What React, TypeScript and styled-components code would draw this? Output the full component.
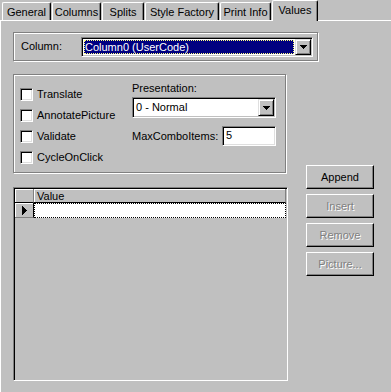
import React from "react";
import styled, { createGlobalStyle } from "styled-components";

const Global = createGlobalStyle`
  html, body { margin: 0; padding: 0; background: #c0c0c0; }
  body {
    font-family: "Liberation Sans", Arial, sans-serif;
    font-size: 11px;
    line-height: 13px;
    color: #000;
  }
  * { box-sizing: border-box; }
`;

const Window = styled.div`
  width: 391px;
  height: 392px;
  overflow: hidden;
  background: #c0c0c0;
  display: flex;
  flex-direction: column;
`;

const TabStrip = styled.div`
  height: 20px;
  flex: none;
  display: flex;
  align-items: flex-end;
  padding-left: 2px;
  gap: 1px;
  position: relative;
  z-index: 1;
`;

const Tab = styled.div<{ $w: number; $active?: boolean }>`
  width: ${(p) => p.$w}px;
  height: ${(p) => (p.$active ? 21 : 18)}px;
  margin-bottom: ${(p) => (p.$active ? -1 : 0)}px;
  background: #c0c0c0;
  border-top: 1px solid #fff;
  border-left: 1px solid #fff;
  border-right: 1px solid #000;
  box-shadow: inset -1px 0 #808080;
  border-top-left-radius: 2px;
  border-top-right-radius: 2px;
  display: flex;
  justify-content: center;
  align-items: flex-start;
  padding-top: 3px;
  white-space: nowrap;
`;

const Page = styled.div`
  flex: 1;
  border-top: 1px solid #fff;
  border-left: 1px solid #fff;
  padding: 11px 0 0 12px;
  display: flex;
  flex-direction: column;
`;

const Group = styled.div<{ $w: number; $h: number }>`
  width: ${(p) => p.$w}px;
  height: ${(p) => p.$h}px;
  flex: none;
  border: 1px solid #808080;
  box-shadow: inset 1px 1px #fff, 1px 1px #fff;
`;

const ColumnGroup = styled(Group)`
  display: flex;
  align-items: flex-start;
  padding: 4px 0 0 7px;
`;

const FieldLabel = styled.span<{ $w?: number }>`
  width: ${(p) => (p.$w ? `${p.$w}px` : "auto")};
  flex: none;
  white-space: nowrap;
`;

const ColumnLabel = styled(FieldLabel)`
  margin-top: 3px;
`;

const Combo = styled.div<{ $w: number; $h: number }>`
  width: ${(p) => p.$w}px;
  height: ${(p) => p.$h}px;
  flex: none;
  background: #fff;
  border-top: 1px solid #808080;
  border-left: 1px solid #808080;
  border-right: 1px solid #fff;
  border-bottom: 1px solid #fff;
  box-shadow: inset 1px 1px #000, inset -1px -1px #c0c0c0;
  padding: 1px;
  display: flex;
  align-items: stretch;
`;

const ComboText = styled.div<{ $selected?: boolean }>`
  flex: 1;
  margin: 1px 1px 1px 1px;
  padding-left: ${(p) => (p.$selected ? 1 : 1)}px;
  display: flex;
  align-items: center;
  white-space: nowrap;
  color: ${(p) => (p.$selected ? "#fff" : "#000")};
  background: ${(p) => (p.$selected ? "#000080" : "transparent")};
  outline: ${(p) => (p.$selected ? "1px dotted #ffff80" : "none")};
  outline-offset: -1px;
`;

const DropButton = styled.div`
  width: 16px;
  flex: none;
  background: #c0c0c0;
  border-top: 1px solid #dfdfdf;
  border-left: 1px solid #dfdfdf;
  border-right: 1px solid #000;
  border-bottom: 1px solid #000;
  box-shadow: inset 1px 1px #fff, inset -1px -1px #808080;
  display: flex;
  align-items: center;
  justify-content: center;
`;

const Row = styled.div`
  display: flex;
  align-items: flex-start;
  gap: 18px;
  margin-top: 13px;
`;

const LeftColumn = styled.div`
  width: 275px;
  flex: none;
  display: flex;
  flex-direction: column;
`;

const OptionsGroup = styled(Group)`
  display: flex;
  padding: 9px 0 0 6px;
`;

const CheckList = styled.div`
  width: 112px;
  flex: none;
  display: flex;
  flex-direction: column;
`;

const CheckRow = styled.label`
  height: 21px;
  display: flex;
  align-items: center;
  gap: 4px;
  white-space: nowrap;
`;

const CheckBox = styled.span`
  width: 13px;
  height: 13px;
  flex: none;
  background: #fff;
  border-top: 1px solid #808080;
  border-left: 1px solid #808080;
  border-right: 1px solid #fff;
  border-bottom: 1px solid #fff;
  box-shadow: inset 1px 1px #000, inset -1px -1px #dfdfdf;
`;

const Settings = styled.div`
  display: flex;
  flex-direction: column;
  padding-top: -2px;
  margin-top: -2px;
`;

const PresentationCombo = styled(Combo)`
  margin-top: 2px;
`;

const MaxRow = styled.div`
  display: flex;
  align-items: center;
  margin-top: 8px;
`;

const TextInput = styled.div<{ $w: number }>`
  width: ${(p) => p.$w}px;
  height: 20px;
  background: #fff;
  border-top: 1px solid #808080;
  border-left: 1px solid #808080;
  border-right: 1px solid #fff;
  border-bottom: 1px solid #fff;
  box-shadow: inset 1px 1px #000, inset -1px -1px #dfdfdf;
  padding: 2px 0 0 3px;
`;

const Grid = styled.div`
  width: 275px;
  height: 194px;
  margin-top: 14px;
  border-top: 1px solid #808080;
  border-left: 1px solid #808080;
  border-right: 1px solid #fff;
  border-bottom: 1px solid #fff;
  box-shadow: inset 1px 1px #000;
  padding: 1px 1px 0 1px;
  display: flex;
  flex-direction: column;
`;

const GridRow = styled.div<{ $h: number }>`
  height: ${(p) => p.$h}px;
  display: flex;
  flex: none;
`;

const HeaderCell = styled.div<{ $w?: number }>`
  ${(p) => (p.$w ? `width: ${p.$w}px; flex: none;` : "flex: 1;")}
  background: #c0c0c0;
  border-right: 1px solid #808080;
  border-bottom: 1px solid #000;
  box-shadow: inset 1px 1px #fff;
  padding: 1px 0 0 3px;
  white-space: nowrap;
`;

const Selector = styled(HeaderCell)`
  display: flex;
  align-items: center;
  justify-content: center;
  padding: 0 0 0 1px;
  border-bottom: 1px solid #808080;
  border-right: 1px solid #000;
`;

const DataCell = styled.div`
  flex: 1;
  background: #fff;
  outline: 1px dotted #000;
  outline-offset: -1px;
`;

const Buttons = styled.div`
  display: flex;
  flex-direction: column;
  gap: 5px;
  padding-top: 91px;
`;

const Button = styled.div<{ $disabled?: boolean }>`
  width: 68px;
  height: 24px;
  background: #c0c0c0;
  border-top: 1px solid #fff;
  border-left: 1px solid #fff;
  border-right: 1px solid #000;
  border-bottom: 1px solid #000;
  box-shadow: inset -1px -1px #808080;
  display: flex;
  align-items: center;
  justify-content: center;
  color: ${(p) => (p.$disabled ? "#808080" : "#000")};
  text-shadow: ${(p) => (p.$disabled ? "1px 1px 0 #fff" : "none")};
`;

const DownArrow = () => (
  <svg width="7" height="4" viewBox="0 0 7 4" shapeRendering="crispEdges">
    <path d="M0 0h7v1H0z M1 1h5v1H1z M2 2h3v1H2z M3 3h1v1H3z" fill="#000" />
  </svg>
);

const RightArrow = () => (
  <svg width="5" height="9" viewBox="0 0 5 9" shapeRendering="crispEdges">
    <path d="M0 0h1v9H0z M1 1h1v7H1z M2 2h1v5H2z M3 3h1v3H3z M4 4h1v1H4z" fill="#000" />
  </svg>
);

const tabs: { label: string; w: number; active?: boolean }[] = [
  { label: "General", w: 49 },
  { label: "Columns", w: 49 },
  { label: "Splits", w: 42 },
  { label: "Style Factory", w: 74 },
  { label: "Print Info", w: 51 },
  { label: "Values", w: 46, active: true },
];

const checks = ["Translate", "AnnotatePicture", "Validate", "CycleOnClick"];

const buttons: { label: string; disabled?: boolean }[] = [
  { label: "Append" },
  { label: "Insert", disabled: true },
  { label: "Remove", disabled: true },
  { label: "Picture...", disabled: true },
];

export default function App() {
  return (
    <Window>
      <Global />
      <TabStrip>
        {tabs.map((t) => (
          <Tab key={t.label} $w={t.w} $active={t.active}>
            {t.label}
          </Tab>
        ))}
      </TabStrip>
      <Page>
        <ColumnGroup $w={305} $h={29}>
          <ColumnLabel $w={60}>Column:</ColumnLabel>
          <Combo $w={232} $h={20}>
            <ComboText $selected>Column0 (UserCode)</ComboText>
            <DropButton>
              <DownArrow />
            </DropButton>
          </Combo>
        </ColumnGroup>
        <Row>
          <LeftColumn>
            <OptionsGroup $w={273} $h={99}>
              <CheckList>
                {checks.map((c) => (
                  <CheckRow key={c}>
                    <CheckBox />
                    <span>{c}</span>
                  </CheckRow>
                ))}
              </CheckList>
              <Settings>
                <FieldLabel>Presentation:</FieldLabel>
                <PresentationCombo $w={144} $h={21}>
                  <ComboText>0 - Normal</ComboText>
                  <DropButton>
                    <DownArrow />
                  </DropButton>
                </PresentationCombo>
                <MaxRow>
                  <FieldLabel $w={90}>MaxComboItems:</FieldLabel>
                  <TextInput $w={54}>5</TextInput>
                </MaxRow>
              </Settings>
            </OptionsGroup>
            <Grid>
              <GridRow $h={14}>
                <HeaderCell $w={19} />
                <HeaderCell>Value</HeaderCell>
              </GridRow>
              <GridRow $h={15}>
                <Selector $w={19}>
                  <RightArrow />
                </Selector>
                <DataCell />
              </GridRow>
            </Grid>
          </LeftColumn>
          <Buttons>
            {buttons.map((b) => (
              <Button key={b.label} $disabled={b.disabled}>
                {b.label}
              </Button>
            ))}
          </Buttons>
        </Row>
      </Page>
    </Window>
  );
}
